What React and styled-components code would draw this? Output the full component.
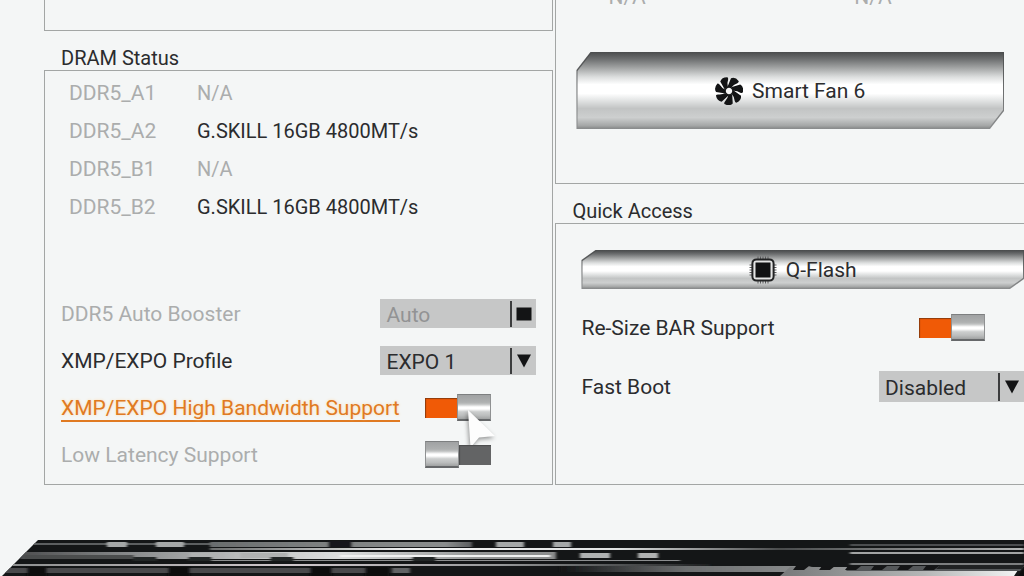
import React, { useState } from 'react';
import styled, { createGlobalStyle } from 'styled-components';

const GlobalStyle = createGlobalStyle`
  * {
    box-sizing: border-box;
  }
  body {
    margin: 0;
    overflow: hidden;
    background: #f4f6f6;
    color: #2b2c2e;
    font-family: Roboto, 'Liberation Sans', sans-serif;
    font-size: 21px;
    line-height: 24px;
  }
  button, select {
    font: inherit;
    color: inherit;
  }
`;

const line = '#a3a6a5';
const muted = '#abadad';
const orange = '#e07a22';

const memorySlots = [
  { slot: 'DDR5_A1', module: 'N/A' },
  { slot: 'DDR5_A2', module: 'G.SKILL 16GB 4800MT/s' },
  { slot: 'DDR5_B1', module: 'N/A' },
  { slot: 'DDR5_B2', module: 'G.SKILL 16GB 4800MT/s' }
];

const FanIcon = () => (
  <svg width='28' height='28' viewBox='-14 -14 28 28' aria-hidden='true'>
    {[0, 51.4, 102.9, 154.3, 205.7, 257.1, 308.6].map(angle => (
      <path
        key={angle}
        transform={`rotate(${angle})`}
        d='M-1.6 -4 L2 -12.8 Q6.4 -14.4 9.8 -9.8 Q9.8 -8.6 8.4 -7.8 Q4.4 -6.4 2.4 -3.4 Z'
        fill='#131415'
      />
    ))}
    <circle r='3.8' fill='#f6f6f6' stroke='#131415' strokeWidth='1.2' />
  </svg>
);

const ChipIcon = () => (
  <svg width='28' height='28' viewBox='0 0 28 28' aria-hidden='true'>
    <path
      d='M9 0.5V27.5M11.5 0.5V27.5M14 0.5V27.5M16.5 0.5V27.5M19 0.5V27.5M0.5 9H27.5M0.5 11.5H27.5M0.5 14H27.5M0.5 16.5H27.5M0.5 19H27.5'
      stroke='#5c5d5e'
      strokeWidth='1'
    />
    <rect x='3.4' y='3.4' width='21.2' height='21.2' rx='4' fill='#e4e5e5' stroke='#232425' strokeWidth='2' />
    <rect x='6.5' y='6.5' width='15' height='15' fill='#111213' />
  </svg>
);

const Setting = ({ id, label, muted: isMuted, active, tall, children }) => (
  <SettingRow $tall={tall}>
    <Label htmlFor={id} $muted={isMuted} $active={active}>
      {label}
    </Label>
    <Control>{children}</Control>
  </SettingRow>
);

const Dropdown = ({ id, options, disabled, tall }) => (
  <SelectBox $tall={tall}>
    <Select id={id} disabled={disabled}>
      {options.map(option => (
        <option key={option}>{option}</option>
      ))}
    </Select>
    <SelectMark>
      <svg width='16' height='14' viewBox='0 0 16 14' aria-hidden='true'>
        {disabled ? (
          <rect x='0.5' y='0.5' width='15' height='13' fill='#131415' />
        ) : (
          <path d='M1 0.5H15L8 13.5Z' fill='#131415' />
        )}
      </svg>
    </SelectMark>
  </SelectBox>
);

const FooterArt = () => (
  <Artwork viewBox='0 0 1024 36' preserveAspectRatio='none' aria-hidden='true'>
    <defs>
      <clipPath id='slant'>
        <path d='M38 0H1024V36H2Z' />
      </clipPath>
      <linearGradient id='upper' x1='0' x2='1'>
        <stop offset='0' stopColor='#6a6d6e' />
        <stop offset='0.4' stopColor='#7c7f7f' />
        <stop offset='0.9' stopColor='#8a8d8d' />
        <stop offset='1' stopColor='#5a5c5d' />
      </linearGradient>
      <linearGradient id='middle' x1='0' x2='1'>
        <stop offset='0' stopColor='#4e4f50' />
        <stop offset='0.2' stopColor='#87898a' />
        <stop offset='0.45' stopColor='#c4c6c6' />
        <stop offset='0.6' stopColor='#dcdede' />
        <stop offset='0.85' stopColor='#969898' />
        <stop offset='1' stopColor='#8a8c8c' />
      </linearGradient>
      <linearGradient id='streak' x1='0' x2='1'>
        <stop offset='0' stopColor='#6c6e6e' />
        <stop offset='0.25' stopColor='#f2f3f3' />
        <stop offset='0.5' stopColor='#e0e2e2' />
        <stop offset='0.7' stopColor='#4a4c4d' />
        <stop offset='1' stopColor='#b4b6b6' />
      </linearGradient>
      <linearGradient id='lower' x1='0' x2='1'>
        <stop offset='0' stopColor='#8d8f8f' />
        <stop offset='0.4' stopColor='#d0c8cc' />
        <stop offset='0.7' stopColor='#97999a' />
        <stop offset='1' stopColor='#1d1f20' />
      </linearGradient>
      <linearGradient id='tail' x1='0' x2='1'>
        <stop offset='0' stopColor='#121415' />
        <stop offset='0.5' stopColor='#6c6e6f' />
        <stop offset='1' stopColor='#8c8e8f' />
      </linearGradient>
      <linearGradient id='blade' x1='0' x2='1'>
        <stop offset='0' stopColor='#77797a' />
        <stop offset='0.6' stopColor='#b4b6b6' />
        <stop offset='1' stopColor='#f4f5f5' />
      </linearGradient>
      <filter id='soften' x='-5%' y='-30%' width='110%' height='160%'>
        <feGaussianBlur stdDeviation='1.6 0.4' />
      </filter>
    </defs>
    <g clipPath='url(#slant)'>
      <rect width='1024' height='36' fill='#141617' />
      <g filter='url(#soften)'>
        <rect x='30' y='3' width='180' height='2' fill='#5c5f60' />
        <rect x='210' y='2' width='262' height='5' fill='url(#upper)' />
        <rect x='328' y='1' width='24' height='6' fill='#17191a' />
        <rect x='210' y='8' width='814' height='2' fill='url(#streak)' />
        <rect x='20' y='12' width='536' height='7' fill='url(#middle)' />
        <rect x='24' y='15' width='110' height='4' fill='#4b4d4e' />
        <rect x='340' y='15' width='210' height='2' fill='#f0f1f1' />
        <rect x='200' y='20' width='480' height='1' fill='#8c8e8f' />
        <rect x='10' y='24' width='700' height='2' fill='url(#lower)' />
        <rect x='0' y='28' width='370' height='5' fill='#48494b' />
        <rect x='560' y='26' width='250' height='6' fill='url(#tail)' />
        {[[107, 20], [156, 28], [496, 28], [553, 18]].map(([x, width]) => (
          <rect key={x} x={x} y='2' width={width} height='5' fill='#a5a8a8' />
        ))}
        {[[190, 24], [240, 48], [580, 30], [638, 20]].map(([x, width]) => (
          <rect key={x} x={x} y='13' width={width} height='5' fill='#b0b2b2' />
        ))}
        {[[133, 24], [188, 24], [270, 24], [412, 24]].map(([x, width]) => (
          <rect key={x} x={x} y='17' width={width} height='4' fill='#232526' />
        ))}
        {[[27, 20], [168, 22], [310, 22], [365, 24]].map(([x, width]) => (
          <rect key={x} x={x} y='27' width={width} height='9' fill='#08090a' />
        ))}
        <rect x='392' y='28' width='18' height='5' fill='#626465' />
        <rect x='850' y='4' width='174' height='2' fill='#4c4e4f' />
        <rect x='850' y='12' width='174' height='2' fill='#a2a4a4' />
        <rect x='850' y='23' width='174' height='2' fill='#7d7f80' />
      </g>
      <path d='M790 27H1020L1014 36H780Z' fill='url(#blade)' />
      <path d='M850 26H1024L1020 31H846Z' fill='#55585a' />
      {[796, 822, 848, 874, 900, 926].map(x => (
        <path key={x} d={`M${x} 26H${x + 13}L${x + 8} 30H${x - 3}Z`} fill='#141516' />
      ))}
      <path d='M940 25H1024L1022 29H936Z' fill='#202223' />
      <path d='M1018 36L1024 28V36Z' fill='#0c0d0e' />
    </g>
  </Artwork>
);

const App = () => {
  const [toggles, setToggles] = useState({
    bandwidth: true,
    latency: false,
    resizeBar: true
  });

  const flip = name => () =>
    setToggles(current => ({ ...current, [name]: !current[name] }));

  return (
    <Page>
      <GlobalStyle />
      <Columns>
        <Column>
          <PreviousPanel />
          <PanelTitle>DRAM Status</PanelTitle>
          <DramPanel>
            <SlotTable>
              <tbody>
                {memorySlots.map(({ slot, module }) => (
                  <tr key={slot}>
                    <SlotName scope='row'>{slot}</SlotName>
                    <SlotModule $empty={module === 'N/A'}>{module}</SlotModule>
                  </tr>
                ))}
              </tbody>
            </SlotTable>
            <Settings>
              <Setting id='booster' label='DDR5 Auto Booster' muted>
                <Dropdown id='booster' options={['Auto']} disabled />
              </Setting>
              <Setting id='profile' label='XMP/EXPO Profile'>
                <Dropdown id='profile' options={['EXPO 1', 'Disabled']} />
              </Setting>
              <Setting id='bandwidth' label='XMP/EXPO High Bandwidth Support' active>
                <Toggle id='bandwidth' checked={toggles.bandwidth} onChange={flip('bandwidth')} />
                <Pointer width='32' height='42' viewBox='0 0 32 42' aria-hidden='true'>
                  <path d='M2 2L29 28L13 29.5L4.5 39.5Z' fill='#fdfdfd' />
                </Pointer>
              </Setting>
              <Setting id='latency' label='Low Latency Support' muted>
                <Toggle id='latency' checked={toggles.latency} onChange={flip('latency')} />
              </Setting>
            </Settings>
          </DramPanel>
        </Column>
        <Column>
          <FanPanel>
            <FanReadings>
              <span>N/A</span>
              <span>N/A</span>
            </FanReadings>
            <MetalButton type='button' $deep>
              <FanFace>
                <FanIcon />
                Smart Fan 6
              </FanFace>
            </MetalButton>
          </FanPanel>
          <PanelTitle>Quick Access</PanelTitle>
          <QuickPanel>
            <MetalButton type='button'>
              <FlashFace>
                <ChipIcon />
                Q-Flash
              </FlashFace>
            </MetalButton>
            <QuickSettings>
              <Setting id='resize-bar' label='Re-Size BAR Support' tall>
                <Toggle id='resize-bar' checked={toggles.resizeBar} onChange={flip('resizeBar')} />
              </Setting>
              <Setting id='fast-boot' label='Fast Boot' tall>
                <Dropdown id='fast-boot' options={['Disabled', 'Enabled']} tall />
              </Setting>
            </QuickSettings>
          </QuickPanel>
        </Column>
      </Columns>
      <FooterArt />
    </Page>
  );
};

const Page = styled.main`
  min-height: 100vh;
  display: flex;
  flex-direction: column;
  justify-content: space-between;
`;

const Columns = styled.div`
  display: grid;
  grid-template-columns: minmax(0, 510fr) minmax(0, 469fr);
  gap: 2px;
  padding-left: 44px;
`;

const Column = styled.section`
  display: flex;
  flex-direction: column;
`;

const PreviousPanel = styled.div`
  height: 31px;
  border: 1px solid ${line};
  border-top: 0;
`;

const PanelTitle = styled.h2`
  margin: 0;
  padding: 15px 17px 0;
  font-size: 20px;
  font-weight: 400;
  line-height: 24px;
`;

const DramPanel = styled.div`
  flex: 1;
  display: flex;
  flex-direction: column;
  justify-content: space-between;
  gap: 64px;
  padding: 3px 16px 6px;
  border: 1px solid ${line};
`;

const SlotTable = styled.table`
  width: 100%;
  border-collapse: collapse;
  table-layout: fixed;
  line-height: 38px;

  th,
  td {
    padding: 0;
  }
`;

const SlotName = styled.th`
  width: 136px;
  && {
    padding-left: 8px;
  }
  color: ${muted};
  font-weight: 400;
  text-align: left;
`;

const SlotModule = styled.td`
  color: ${({ $empty }) => ($empty ? muted : 'inherit')};
  font-size: 20px;
`;

const Settings = styled.div`
  --control: 156px;
`;

const QuickSettings = styled.div`
  --control: 145px;
  margin-top: 9px;
`;

const SettingRow = styled.div`
  display: grid;
  grid-template-columns: minmax(0, 1fr) var(--control);
  align-items: center;
  height: ${({ $tall }) => ($tall ? 59 : 47)}px;
`;

const Label = styled.label`
  justify-self: start;
  white-space: nowrap;
  color: ${({ $muted, $active }) => ($active ? orange : $muted ? muted : 'inherit')};
  ${({ $active }) =>
    $active &&
    `
    box-shadow: 0 2px 0 ${orange};
    text-shadow: 0 0 3px #ffd9a8;
  `}
`;

const Control = styled.div`
  position: relative;
  display: flex;
  justify-content: center;
`;

const SelectBox = styled.div`
  flex: 1;
  display: grid;
  height: ${({ $tall }) => ($tall ? 31 : 29)}px;
  background: #c6c7c7;
`;

const Select = styled.select`
  grid-area: 1 / 1;
  appearance: none;
  width: 100%;
  padding: 2px 32px 0 6px;
  border: 0;
  border-radius: 0;
  background: none;

  &:disabled {
    color: #929394;
    opacity: 1;
  }
`;

const SelectMark = styled.span`
  grid-area: 1 / 1;
  justify-self: end;
  display: flex;
  align-items: center;
  justify-content: center;
  width: 26px;
  margin: 2px 0 1px;
  border-left: 2px solid #3c3d3e;
  pointer-events: none;
`;

const Toggle = styled.input.attrs({ type: 'checkbox', role: 'switch' })`
  appearance: none;
  display: flex;
  flex-direction: ${({ checked }) => (checked ? 'row-reverse' : 'row')};
  align-items: center;
  width: 66px;
  height: 24px;
  margin: 0;

  &::before {
    content: '';
    width: 33px;
    height: 24px;
    border: 1px solid #8f9192;
    border-top-color: #7d7f80;
    border-bottom: 2px solid #66686a;
    background: linear-gradient(#a0a2a3, #aeb0b0 30%, #c0c2c2 38%, #fff 50%, #fff 58%, #cccece 70%, #bcbebe 85%, #a0a2a2);
  }

  &::after {
    content: '';
    width: 33px;
    height: 20px;
    background: ${({ checked }) => (checked ? '#f05a06' : '#636465')};
    box-shadow: inset 1px 1px 1px ${({ checked }) => (checked ? '#8c3a0c' : '#4c4d4e')};
  }
`;

const Pointer = styled.svg`
  position: absolute;
  top: 12px;
  left: 86px;
  filter: drop-shadow(-1px 2px 2px rgba(0, 0, 0, 0.4));
  pointer-events: none;
`;

const FanPanel = styled.div`
  padding: 0 20px 54px;
  border-left: 1px solid ${line};
  border-bottom: 1px solid ${line};
`;

const FanReadings = styled.div`
  display: grid;
  grid-template: 100% / 1fr 1fr;
  column-gap: 96px;
  align-items: end;
  height: 9px;
  margin-bottom: 43px;
  padding-left: 32px;
  color: ${muted};
`;

const MetalButton = styled.button`
  display: block;
  width: 100%;
  padding: 1px;
  border: 0;
  background: linear-gradient(#4c4e4f, #8b8d8e);
  --cut-x: 14px;
  --cut-y: ${({ $deep }) => ($deep ? '18px' : '10px')};
  clip-path: polygon(
    var(--cut-x) 0,
    100% 0,
    100% calc(100% - var(--cut-y)),
    calc(100% - var(--cut-x)) 100%,
    0 100%,
    0 var(--cut-y)
  );
`;

const Face = styled.span`
  display: flex;
  align-items: center;
  justify-content: center;
  gap: 9px;
  clip-path: polygon(
    var(--cut-x) 0,
    100% 0,
    100% calc(100% - var(--cut-y)),
    calc(100% - var(--cut-x)) 100%,
    0 100%,
    0 var(--cut-y)
  );
  background: linear-gradient(
    #4f5152,
    #6c6e6f 8%,
    #a3a5a5 20%,
    #dcdede 32%,
    #fff 42%,
    #fff 54%,
    #e0e2e2 64%,
    #c2c4c4 74%,
    #cdcfcf 86%,
    #a4a6a6 97%,
    #8c8e8e
  );
`;

const FanFace = styled(Face)`
  height: 75px;
`;

const FlashFace = styled(Face)`
  height: 37px;
`;

const QuickPanel = styled.div`
  flex: 1;
  padding: 26px 0 0 25px;
  border: 1px solid ${line};
  border-right: 0;
`;

const Artwork = styled.svg`
  display: block;
  width: 100%;
  height: 36px;
`;

export default App;
